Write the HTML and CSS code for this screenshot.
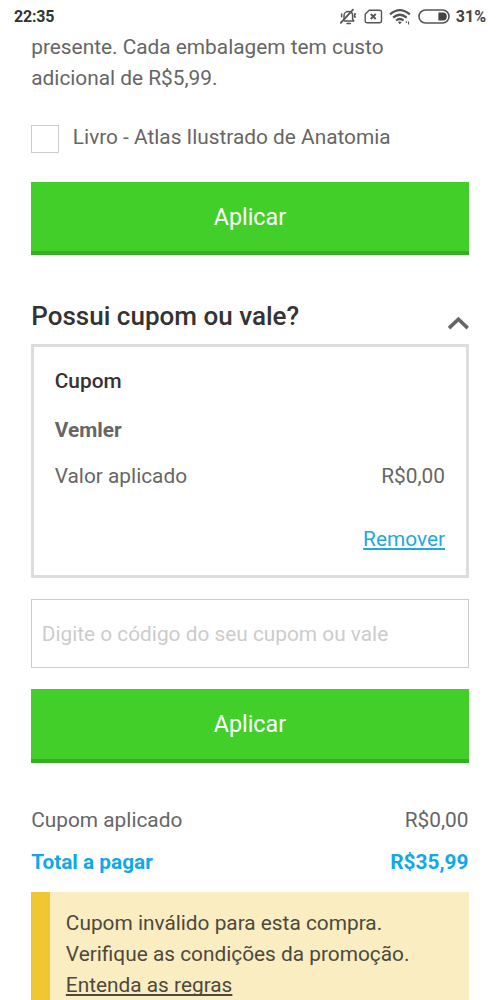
FILE: index.html
```html
<!DOCTYPE html>
<html lang="pt-BR">
<head>
<meta charset="utf-8">
<meta name="viewport" content="width=device-width, initial-scale=1">
<title>Cupom ou vale</title>
<link rel="stylesheet" href="styles.css">
</head>
<body>
<header class="status">
  <span class="clock">22:35</span>
  <div class="status-icons">
    <svg class="icon-bell" width="18" height="18" viewBox="0 0 18 18" fill="none" stroke="#555" stroke-width="1.5" stroke-linecap="round" stroke-linejoin="round">
      <path d="M5.4 13H14.8L13.6 11.2V7.4C13.6 5.4 12 3.6 9.4 3.6S5 5.4 5 7.4V10.4M8 15.4H11.4M2.6 6V8.8M16.6 6H15.6V9H16.4"/>
      <path d="M14 1.7L1.8 14.8" stroke-width="1.8"/>
    </svg>
    <svg class="icon-sim" width="19" height="15" viewBox="0 0 19 15" fill="none" stroke="#555" stroke-width="1.4" stroke-linejoin="round">
      <path d="M5.2 1.2H15.5Q17.5 1.2 17.5 3.2V11.7Q17.5 13.7 15.5 13.7H3.2Q1.2 13.7 1.2 11.7V5.2Z"/>
      <path d="M6.8 5L11.7 10M11.7 5L6.8 10" stroke-width="1.8"/>
    </svg>
    <svg class="icon-wifi" width="22" height="18" viewBox="0 0 22 18" fill="none" stroke="#555" stroke-width="2.2">
      <path d="M1 6.4Q10.8-2.2 20.8 6.4M4.1 9.6Q10.8 3.9 17.7 9.6M7.1 12.5Q10.8 9.5 14.6 12.5"/>
      <path d="M8.8 14.1Q10.8 12.7 12.9 14.1L10.8 16.3Z" fill="#555" stroke="none"/>
      <path d="M17.3 13.2V15M19.5 13.6V16.4" stroke-width="1.1"/>
    </svg>
    <svg class="icon-battery" width="32" height="15" viewBox="0 0 32 15">
      <rect x="1" y="1" width="30" height="13" rx="6.5" fill="none" stroke="#555" stroke-width="1.6"/>
      <path d="M20.4 3.5H25Q28.8 3.5 28.8 7.5T25 11.5H20.4Z" fill="#444"/>
    </svg>
    <span class="percent">31%</span>
  </div>
</header>
<main class="page">
  <p class="gift-note">presente. Cada embalagem tem custo<br>adicional de R$5,99.</p>
  <label class="gift-option"><span class="checkbox"></span>Livro - Atlas Ilustrado de Anatomia</label>
  <button class="button">Aplicar</button>
  <div class="section-head">
    <h2 class="section-title">Possui cupom ou vale?</h2>
    <svg class="chevron" width="22" height="15" viewBox="0 0 22 15" fill="none" stroke="#666" stroke-width="3.6"><path d="M2 12.1L11.4 3.2L20.8 12.1"/></svg>
  </div>
  <section class="coupon">
    <h3 class="coupon-title">Cupom</h3>
    <div class="coupon-name">Vemler</div>
    <div class="row"><span>Valor aplicado</span><span>R$0,00</span></div>
    <a class="remove">Remover</a>
  </section>
  <input class="code" type="text" placeholder="Digite o código do seu cupom ou vale">
  <button class="button button-coupon">Aplicar</button>
  <div class="totals">
    <div class="row"><span>Cupom aplicado</span><span>R$0,00</span></div>
    <div class="row total"><span>Total a pagar</span><span>R$35,99</span></div>
  </div>
  <div class="alert">Cupom inválido para esta compra.<br>Verifique as condições da promoção.<br><a class="rules">Entenda as regras</a></div>
</main>
</body>
</html>
```
FILE: styles.css
```css
* { box-sizing: border-box; }

body {
  display: flex;
  flex-direction: column;
  height: 1000px;
  margin: 0;
  overflow: hidden;
  background: #fff;
  color: #666;
  font-family: Roboto, "Liberation Sans", sans-serif;
  font-size: 20.83px;
  line-height: 31.25px;
}

.status {
  display: flex;
  flex: none;
  align-items: center;
  justify-content: space-between;
  height: 31.5px;
  padding: 2px 14px 0;
  color: #333;
  font-size: 16px;
  font-weight: 700;
}

.clock { letter-spacing: -0.2px; }
.status-icons { display: flex; align-items: center; }
.icon-bell { margin-right: 7px; }
.icon-sim { margin-right: 6px; }
.icon-wifi { margin-right: 7px; }
.icon-battery { margin-right: 6px; }
.percent { color: #444; }

.page {
  display: flex;
  flex-direction: column;
  padding: 0 31.5px 0 31.25px;
}

.gift-note { margin: 0; }

.gift-option {
  display: flex;
  align-items: center;
  gap: 13.6px;
  margin-top: 28.4px;
}

.checkbox {
  width: 28px;
  height: 28px;
  margin-top: 2.5px;
  border: 1.4px solid #ccc;
}

.button {
  flex: none;
  height: 73px;
  margin: 28.8px 0 0;
  padding: 2px 0 0;
  border: 0;
  border-bottom: 4px solid #34af21;
  background: #42cf2a;
  color: #fff;
  font: 400 23.3px/67px Roboto, "Liberation Sans", sans-serif;
}

.section-head {
  display: flex;
  align-items: center;
  justify-content: space-between;
  height: 32px;
  margin-top: 45.3px;
}

.section-title {
  margin: 0;
  color: #333;
  font-size: 26.04px;
  font-weight: 500;
}

.chevron { margin-top: 13px; }

.coupon {
  display: flex;
  flex-direction: column;
  height: 234px;
  margin-top: 11.3px;
  padding: 18.8px 20.5px 0;
  border: 3px solid #ddd;
}

.coupon-title {
  margin: 0;
  color: #333;
  font-size: inherit;
  font-weight: 500;
}

.coupon-name { margin: 18.2px 0 14.4px; font-weight: 700; }
.row { display: flex; justify-content: space-between; }

.remove {
  align-self: flex-end;
  margin-top: 31.6px;
  color: #1eaadc;
  text-decoration: underline;
  text-decoration-skip-ink: none;
}

.code {
  height: 69px;
  margin: 21.2px 0 0;
  padding: 0 9.5px;
  border: 1.4px solid #ccc;
  border-radius: 0;
  background: #fff;
  font: inherit;
}

.code::placeholder { color: #ccc; }
.button-coupon { height: 74px; margin-top: 21.2px; padding-top: 1px; }

.totals {
  display: flex;
  flex-direction: column;
  gap: 10.5px;
  margin-top: 42px;
}

.total { color: #10a8e6; font-weight: 700; }

.alert {
  height: 125px;
  margin-top: 14px;
  padding: 15.4px 15.6px;
  border-left: 19px solid #f0c631;
  background: #faedc1;
  color: #4d493d;
}

.rules { text-decoration: underline; text-decoration-skip-ink: none; }
```
